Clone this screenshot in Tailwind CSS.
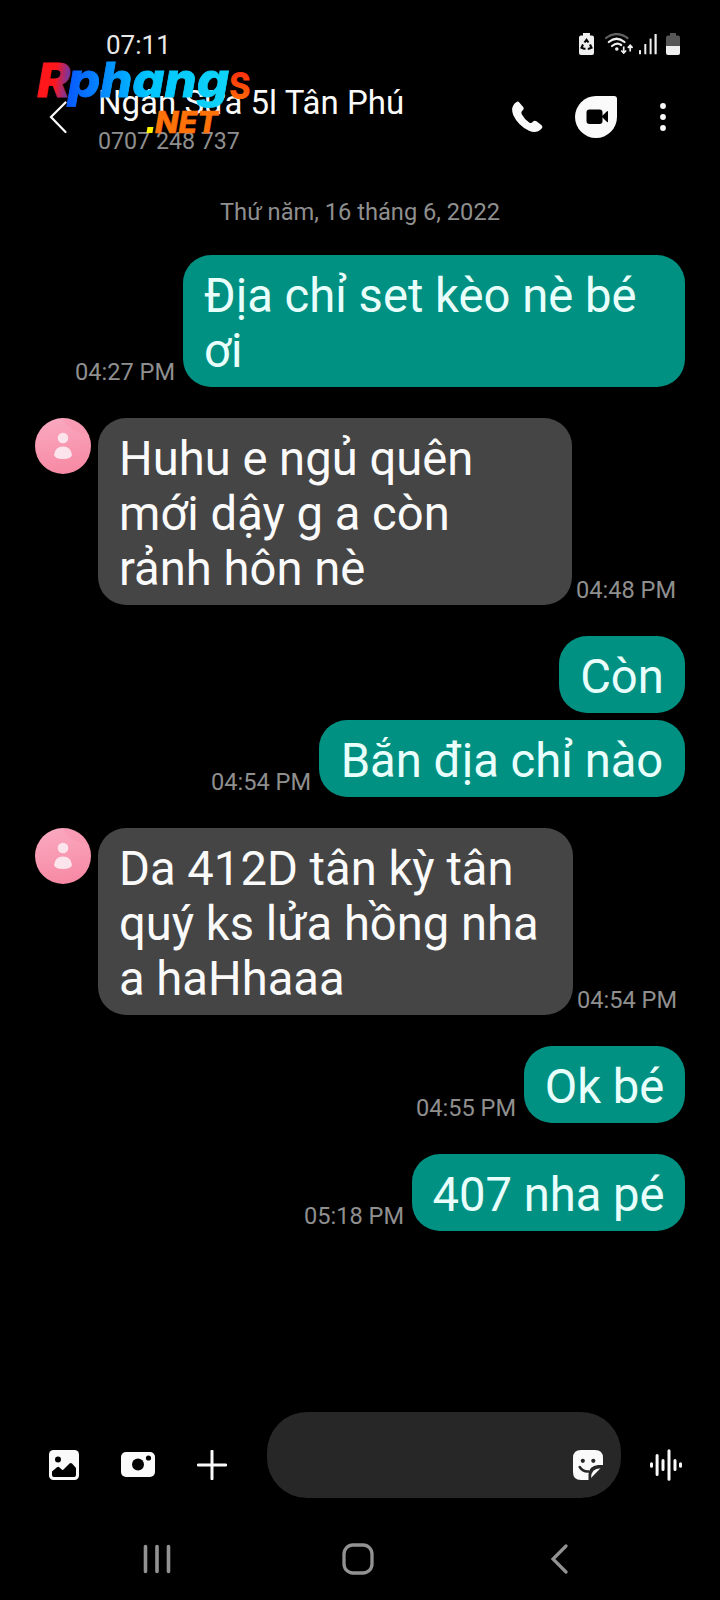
<!DOCTYPE html>
<html lang="vi">
<head>
<meta charset="utf-8">
<title>Tin nhắn</title>
<script src="https://cdn.jsdelivr.net/npm/@tailwindcss/browser@4"></script>
</head>
<body class="bg-black">
<div class="relative flex h-[1600px] w-[720px] flex-col overflow-hidden bg-black font-['Roboto',sans-serif] text-[#fafafa]">

  <!-- Status bar -->
  <div class="flex h-[85px] shrink-0 items-start justify-between pt-[30px] pr-[40px] pl-[106px]">
    <span class="text-[26px] leading-[30px] text-[#e8e8e8]">07:11</span>
    <div class="flex pt-[3px]">
      <svg class="mr-[11px]" width="15" height="22" viewBox="0 0 15 22"><path d="M4 0h7v2.500h2q2 0 2 2V20q0 2-2 2H2q-2 0-2-2V4.500q0-2 2-2h2z" fill="#efefef"/><path d="M5.500 9.500 7.500 6.800 9.500 9.500M11 11.500l1.500 3.200-2.500 1H8.800M4 11.500l-1.500 3.200 2.500 1h1.500" fill="none" stroke="#080808" stroke-width="2.100"/></svg>
      <svg class="mr-[6px]" width="28" height="22" viewBox="0 0 28 22" fill="none" stroke-linecap="round"><path d="M1 5Q11.500-3 22.500 5" stroke="#606060" stroke-width="2.200"/><path d="M3.800 9Q11.500 2.500 19.500 9M7 13Q11.800 9 16.200 12" stroke="#efefef" stroke-width="2.200"/><circle cx="11.800" cy="16" r="1.800" fill="#efefef"/><path d="M18.700 13.500v6M16.300 17.500l2.400 2.500 2.400-2.500M25.200 18.500v-5.500M22.800 14.800l2.400-2.500 2.400 2.500" stroke="#efefef" stroke-width="1.700" stroke-linecap="butt"/></svg>
      <svg class="mr-[9px]" width="18" height="22" viewBox="0 0 18 22" fill="#efefef"><rect y="17" width="2" height="4.300" rx=".5"/><rect x="5.300" y="11" width="2" height="10.300" rx=".5"/><rect x="10.600" y="5.500" width="2" height="15.800" rx=".5"/><rect x="15.500" y="1" width="2.200" height="20.300" rx=".5"/></svg>
      <svg width="14" height="22" viewBox="0 0 14 22"><path d="M4 0h6v2.500h2q2 0 2 2V13H0V4.500q0-2 2-2h2z" fill="#565656"/><path d="M0 13h14v7q0 2-2 2H2q-2 0-2-2z" fill="#efefef"/></svg>
    </div>
  </div>

  <!-- Conversation header -->
  <header class="flex h-[64px] shrink-0 items-start">
    <svg class="mt-[16px] ml-[48px] shrink-0" width="20" height="34" viewBox="0 0 20 34"><path d="M17.500 1.500 3 16 17.500 31" fill="none" stroke="#fafafa" stroke-width="2.200" stroke-linecap="round"/></svg>
    <div class="ml-[30px] flex w-[414px] shrink-0 flex-col whitespace-nowrap">
      <h1 class="h-[42px] text-[33px] leading-[35px]">Ngân Sữa 5l Tân Phú</h1>
      <span class="text-[23.2px] leading-[28px] text-[#8f8f8f]">0707 248 737</span>
    </div>
    <svg class="mt-[16px]" width="31" height="32" viewBox="0 0 31 32"><path d="M4.500 1Q6 0 7.300 1.500L11.200 6Q12.500 7.800 10.500 9.500 8.700 11 9.800 13.200 12.500 18.500 17.500 21.700 19.200 22.700 20.600 21 22.500 18.800 24.500 20.300L29.300 24Q31.200 25.700 29.700 27.500 24.500 33.200 17 29.800 6 24.500 1.200 14 -2 5.500 4.500 1z" fill="#fafafa"/></svg>
    <svg class="mt-[11px] ml-[32px]" width="42" height="42" viewBox="0 0 42 42"><path d="M21 0H39q3 0 3 3V21A21 21 0 1 1 21 0z" fill="#fafafa"/><rect x="11.500" y="13.500" width="16" height="14.500" rx="3" fill="#000"/><path d="M26.500 20.500 32 15.300q1-.6 1 .6v9.600q0 1.200-1 .6z" fill="#000"/></svg>
    <svg class="mt-[18px] ml-[43px]" width="6" height="28" viewBox="0 0 6 28" fill="#fafafa"><circle cx="3" cy="3" r="2.900"/><circle cx="3" cy="14" r="2.900"/><circle cx="3" cy="25" r="2.900"/></svg>
  </header>

  <!-- Messages -->
  <main class="flex h-[1263px] shrink-0 flex-col pt-[49px] pr-[35px] pl-[35px] text-[47.2px] leading-[55px]">
    <p class="mb-[29px] text-center text-[23.65px] leading-[28px] text-[#8f8f8f]">Thứ năm, 16 tháng 6, 2022</p>

    <div class="mb-[31px] flex items-end justify-end">
      <time class="mr-[8px] pb-[1px] text-[23.6px] leading-[28px] whitespace-nowrap text-[#8f8f8f]">04:27 PM</time>
      <p class="w-[502px] rounded-[28px] bg-[#009183] px-[21px] pt-[14px] pb-[8px] whitespace-nowrap text-[#e9fffc]">Địa chỉ set kèo nè bé<br>ơi</p>
    </div>

    <div class="mb-[31px] flex items-end">
      <svg class="mr-[7px] shrink-0 self-start" width="56" height="56" viewBox="0 0 56 56"><defs><linearGradient id="pink" x1="0" y1="0" x2=".2" y2="1"><stop offset="0" stop-color="#faabc2"/><stop offset="1" stop-color="#f78ba5"/></linearGradient></defs><circle cx="28" cy="28" r="28" fill="url(#pink)"/><path d="M28 3Q36 14 54 17A28 28 0 0 0 28 0z" fill="#f78ba5" opacity=".3"/><circle cx="28" cy="20" r="5.300" fill="#fce4ec"/><path d="M19 37Q20 28.500 28 28.500T37 37Q36 41 28 41T19 37z" fill="#fce4ec"/></svg>
      <p class="w-[474px] rounded-[28px] bg-[#454545] px-[21px] pt-[14px] pb-[8px] whitespace-nowrap">Huhu e ngủ quên<br>mới dậy g a còn<br>rảnh hôn nè</p>
      <time class="ml-[4px] pb-[1px] text-[23.6px] leading-[28px] whitespace-nowrap text-[#8f8f8f]">04:48 PM</time>
    </div>

    <div class="mb-[7px] flex justify-end">
      <p class="flex w-[126px] justify-center rounded-[28px] bg-[#009183] pt-[14px] pb-[8px] whitespace-nowrap text-[#e9fffc]">Còn</p>
    </div>

    <div class="mb-[31px] flex items-end justify-end">
      <time class="mr-[8px] pb-[1px] text-[23.6px] leading-[28px] whitespace-nowrap text-[#8f8f8f]">04:54 PM</time>
      <p class="flex w-[366px] justify-center rounded-[28px] bg-[#009183] pt-[14px] pb-[8px] whitespace-nowrap text-[#e9fffc]">Bắn địa chỉ nào</p>
    </div>

    <div class="mb-[31px] flex items-end">
      <svg class="mr-[7px] shrink-0 self-start" width="56" height="56" viewBox="0 0 56 56"><circle cx="28" cy="28" r="28" fill="url(#pink)"/><path d="M28 3Q36 14 54 17A28 28 0 0 0 28 0z" fill="#f78ba5" opacity=".3"/><circle cx="28" cy="20" r="5.300" fill="#fce4ec"/><path d="M19 37Q20 28.500 28 28.500T37 37Q36 41 28 41T19 37z" fill="#fce4ec"/></svg>
      <p class="w-[475px] rounded-[28px] bg-[#454545] px-[21px] pt-[14px] pb-[8px] whitespace-nowrap">Da 412D tân kỳ tân<br>quý ks lửa hồng nha<br>a haHhaaa</p>
      <time class="ml-[4px] pb-[1px] text-[23.6px] leading-[28px] whitespace-nowrap text-[#8f8f8f]">04:54 PM</time>
    </div>

    <div class="mb-[31px] flex items-end justify-end">
      <time class="mr-[8px] pb-[1px] text-[23.6px] leading-[28px] whitespace-nowrap text-[#8f8f8f]">04:55 PM</time>
      <p class="flex w-[161px] justify-center rounded-[28px] bg-[#009183] pt-[14px] pb-[8px] whitespace-nowrap text-[#e9fffc]">Ok bé</p>
    </div>

    <div class="flex items-end justify-end">
      <time class="mr-[8px] pb-[1px] text-[23.6px] leading-[28px] whitespace-nowrap text-[#8f8f8f]">05:18 PM</time>
      <p class="flex w-[273px] justify-center rounded-[28px] bg-[#009183] pt-[14px] pb-[8px] whitespace-nowrap text-[#e9fffc]">407 nha pé</p>
    </div>
  </main>

  <!-- Composer -->
  <div class="flex h-[86px] shrink-0 items-start">
    <svg class="mt-[38px] ml-[49px]" width="30" height="30" viewBox="0 0 30 30"><rect width="30" height="30" rx="4.500" fill="#fafafa"/><circle cx="9" cy="9.500" r="3" fill="#000"/><path d="M3 21.500 8 17.200q1.200-1 2.500.2l2.500 2.300q.7.500 1.500-.2l6-6q1.300-1.200 2.500 0L27 18v7q0 2-2 2H5q-2 0-2-2z" fill="#000"/></svg>
    <svg class="mt-[40px] ml-[42px]" width="34" height="25" viewBox="0 0 34 25"><rect width="34" height="25" rx="5" fill="#fafafa"/><circle cx="17" cy="12.500" r="6" fill="#000"/><circle cx="27.500" cy="6" r="2.600" fill="#000"/></svg>
    <svg class="mt-[38px] ml-[42px]" width="30" height="30" viewBox="0 0 30 30"><path d="M15 1.200v27.600M1.200 15h27.600" stroke="#fafafa" stroke-width="3" stroke-linecap="round"/></svg>
    <div class="ml-[40px] flex h-[86px] w-[354px] justify-end rounded-[40px] bg-[#272727] pt-[38px] pr-[18px]">
      <svg width="30" height="30" viewBox="0 0 30 30"><path d="M8 0H22q8 0 8 8v7h-5Q16 16 15.500 24v6H8q-8 0-8-8V8Q0 0 8 0z" fill="#fafafa"/><path d="M18 28q0-9.500 9.500-9.800z" fill="#fafafa"/><circle cx="9.800" cy="10.800" r="2.100" fill="#272727"/><circle cx="20.300" cy="10.800" r="2.100" fill="#272727"/><path d="M6.700 17Q10 22 15.500 21.500" fill="none" stroke="#272727" stroke-width="2.600" stroke-linecap="round"/></svg>
    </div>
    <svg class="mt-[37px] ml-[29px]" width="32" height="32" viewBox="0 0 32 32"><path d="M1.500 14.800v2.400M7.100 6.500v19M13 11.500v9M19 1.700v28.600M25 11.500v9M30.500 14.800v2.400" stroke="#fafafa" stroke-width="3" stroke-linecap="round"/></svg>
  </div>

  <!-- System navigation -->
  <nav class="flex h-[102px] shrink-0 items-start pt-[45px]">
    <svg class="mt-[1px] ml-[143px]" width="28" height="30" viewBox="0 0 28 30"><path d="M2.500 2.500v25M14 2.500v25M25.500 2.500v25" stroke="#929292" stroke-width="3.600" stroke-linecap="round"/></svg>
    <svg class="ml-[171px]" width="32" height="32" viewBox="0 0 32 32"><rect x="2" y="2" width="28" height="28" rx="9" fill="none" stroke="#929292" stroke-width="3.300"/></svg>
    <svg class="mt-[1px] ml-[175px]" width="20" height="30" viewBox="0 0 20 30"><path d="M17 2 4 15 17 28" fill="none" stroke="#929292" stroke-width="3.200" stroke-linecap="round"/></svg>
  </nav>

  <!-- Watermark logo -->
  <svg class="absolute top-[50px] left-[24px] overflow-visible" width="240" height="96" viewBox="-6 -6 240 96" font-family="Inter, sans-serif" font-weight="800" font-style="italic">
    <defs>
      <linearGradient id="red" x1="0" x2="1" y2=".2"><stop offset=".6" stop-color="#ff171b"/><stop offset="1" stop-color="#6838b0"/></linearGradient>
      <linearGradient id="blue"><stop offset="0" stop-color="#0857ff"/><stop offset=".5" stop-color="#00c6ff"/><stop offset="1" stop-color="#10d3f7"/></linearGradient>
      <linearGradient id="fire" x2="0" y2="1"><stop offset=".3" stop-color="#ff2d0e"/><stop offset="1" stop-color="#ff7d00"/></linearGradient>
    </defs>
    <text x="7" y="40.500" font-size="46" textLength="33" lengthAdjust="spacingAndGlyphs" fill="url(#red)" stroke="url(#red)" stroke-width="1">R</text>
    <text x="38" y="40.500" font-size="48" textLength="161" lengthAdjust="spacingAndGlyphs" fill="url(#blue)" stroke="url(#blue)" stroke-width=".8">phang</text>
    <text x="199" y="43" font-size="50" textLength="22" lengthAdjust="spacingAndGlyphs" font-style="normal" font-weight="700" font-family="Roboto, sans-serif" fill="url(#fire)">s</text>
    <rect x="117" y="71" width="6" height="6" fill="#fff200" transform="skewX(-10) translate(13 0)"/>
    <text x="125" y="77" font-size="30" textLength="63" lengthAdjust="spacingAndGlyphs" fill="#ff7209" stroke="#ff7209" stroke-width=".6">NET</text>
  </svg>
</div>
</body>
</html>
